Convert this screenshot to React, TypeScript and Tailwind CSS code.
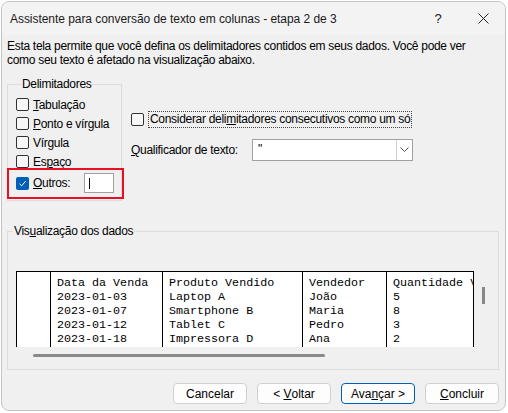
import React from "react";

const ui = { fontFamily: '"Segoe UI", "Liberation Sans", Arial, sans-serif' };
const mono = { fontFamily: '"Liberation Mono", "Courier New", monospace' };

function Box({ checked = false }: { checked?: boolean }) {
  if (checked) {
    return (
      <span className="flex h-[13px] w-[13px] shrink-0 items-center justify-center rounded-[2px] bg-[#005fb8]">
        <svg width="9" height="9" viewBox="0 0 9 9">
          <path d="M1.5 4.8 L3.6 6.8 L7.6 2.2" fill="none" stroke="#fff" strokeWidth="1" />
        </svg>
      </span>
    );
  }
  return <span className="block h-[13px] w-[13px] shrink-0 rounded-[2px] border border-[#333] bg-[#f7f7f7]" />;
}

function Check({ children }: { children: React.ReactNode }) {
  return (
    <div className="flex h-[19px] items-center gap-[4px]">
      <Box />
      <span className="whitespace-nowrap">{children}</span>
    </div>
  );
}

function Btn({ children, primary = false }: { children: React.ReactNode; primary?: boolean }) {
  return (
    <div
      className={`flex h-[21px] w-[74px] items-center justify-center whitespace-nowrap rounded-[4px] bg-[#fdfdfd] ${
        primary ? "border border-[#005fb8]" : "border border-[#d0d0d0]"
      }`}
    >
      {children}
    </div>
  );
}

const rows = [
  ["Data da Venda", "Produto Vendido", "Vendedor", "Quantidade V"],
  ["2023-01-03", "Laptop A", "João", "5"],
  ["2023-01-07", "Smartphone B", "Maria", "8"],
  ["2023-01-12", "Tablet C", "Pedro", "3"],
  ["2023-01-18", "Impressora D", "Ana", "2"],
];

export default function App() {
  return (
    <div
      className="h-[413px] w-[508px] overflow-hidden bg-white pl-[1px] pt-[1px] text-[12px] leading-[14px] tracking-[-0.3px] text-[#000]"
      style={ui}
    >
      <div className="flex h-[410px] w-[505px] flex-col overflow-hidden rounded-[8px] border border-[#c4c4c4] bg-[#f0f0f0]">
        {/* Title bar */}
        <div className="flex h-[33px] shrink-0 items-center bg-[#f3f3f3] pl-[8px] text-[#1a1a1a]">
          <span className="flex-1 whitespace-nowrap tracking-[-0.05px]">
            Assistente para conversão de texto em colunas - etapa 2 de 3
          </span>
          <span className="w-[20px] text-center text-[13px]">?</span>
          <span className="ml-[25px] mr-[12px] flex w-[20px] justify-center">
            <svg width="11" height="11" viewBox="0 0 11 11">
              <path d="M0.5 0.5 L10.5 10.5 M10.5 0.5 L0.5 10.5" stroke="#222" strokeWidth="1" />
            </svg>
          </span>
        </div>

        {/* Description */}
        <div className="mt-[4px] whitespace-nowrap pl-[5px]">
          <p>Esta tela permite que você defina os delimitadores contidos em seus dados. Você pode ver</p>
          <p>como seu texto é afetado na visualização abaixo.</p>
        </div>

        {/* Delimiters row */}
        <div className="mt-[10px] flex pl-[5px]">
          <fieldset className="relative h-[124px] w-[115px] border border-[#dcdcdc] pl-[8px]">
            <legend className="ml-[5px] px-[1px]">Delimitadores</legend>
            <div className="mt-[4px] flex flex-col">
              <Check>
                <u>T</u>abulação
              </Check>
              <Check>
                <u>P</u>onto e vírgula
              </Check>
              <Check>
                Vír<u>g</u>ula
              </Check>
              <Check>
                Es<u>p</u>aço
              </Check>
              <div className="mt-[1px] flex h-[22px] items-center gap-[4px]">
                <Box checked />
                <span className="whitespace-nowrap">
                  <u>O</u>utros:
                </span>
                <div className="ml-[10px] flex h-[20px] w-[30px] items-center border border-[#a0a0a0] bg-white pl-[4px]">
                  <span className="block h-[11px] w-[1px] bg-black" />
                </div>
              </div>
            </div>
            <div className="pointer-events-none absolute bottom-[1px] left-[-1px] right-[-3px] h-[31px] border-2 border-[#e81123]" />
          </fieldset>

          <div className="ml-[9px] mt-[34px] flex flex-col">
            <div className="flex items-center gap-[4px]">
              <Box />
              <span className="whitespace-nowrap border border-dotted border-[#444] px-[1px] leading-[15px]">
                Considerar deli<u>m</u>itadores consecutivos como um só
              </span>
            </div>
            <div className="mt-[11px] flex items-center">
              <span className="w-[121px] whitespace-nowrap">
                <u>Q</u>ualificador de texto:
              </span>
              <div className="flex h-[22px] w-[161px] items-stretch border border-[#a0a0a0] bg-white">
                <span className="flex-1 pl-[5px] pt-[2px]">"</span>
                <span className="flex w-[16px] items-center justify-center border-l border-[#d0d0d0]">
                  <svg width="9" height="6" viewBox="0 0 9 6">
                    <path d="M0.5 0.5 L4.5 4.5 L8.5 0.5" fill="none" stroke="#555" strokeWidth="1" />
                  </svg>
                </span>
              </div>
            </div>
          </div>
        </div>

        {/* Preview */}
        <fieldset className="ml-[5px] mt-[23px] h-[146px] w-[492px] border border-[#dcdcdc]">
          <legend className="ml-[5px] px-[1px]">
            Vis<u>u</u>alização dos dados
          </legend>
          <div className="mt-[33px] flex pl-[8px]">
            <div className="h-[76px] w-[458px] overflow-hidden border-x border-t border-black bg-white tracking-normal" style={mono}>
              <div className="flex h-full text-[11.7px] leading-[14px]">
                <div className="h-full w-[34px] shrink-0 border-r border-black" />
                {[112, 140, 84, 120].map((w, ci) => (
                  <div
                    key={ci}
                    className={`h-full shrink-0 overflow-hidden pl-[6px] pt-[4px] ${ci < 3 ? "border-r border-black" : ""}`}
                    style={{ width: w }}
                  >
                    {rows.map((r, ri) => (
                      <div key={ri} className="whitespace-pre">
                        {r[ci]}
                      </div>
                    ))}
                  </div>
                ))}
              </div>
            </div>
            <div className="ml-[8px] mt-[16px] h-[17px] w-[3px] bg-[#888]" />
          </div>
          <div className="ml-[25px] mt-[7px] h-[3px] w-[292px] rounded-[2px] bg-[#8a8a8a]" />
        </fieldset>

        {/* Buttons */}
        <div className="mt-[13px] flex gap-[10px] pl-[171px] tracking-normal">
          <Btn>Cancelar</Btn>
          <Btn>
            &lt;&nbsp;<u>V</u>oltar
          </Btn>
          <Btn primary>
            Ava<u>n</u>çar&nbsp;&gt;
          </Btn>
          <Btn>
            <u>C</u>oncluir
          </Btn>
        </div>
      </div>
    </div>
  );
}
